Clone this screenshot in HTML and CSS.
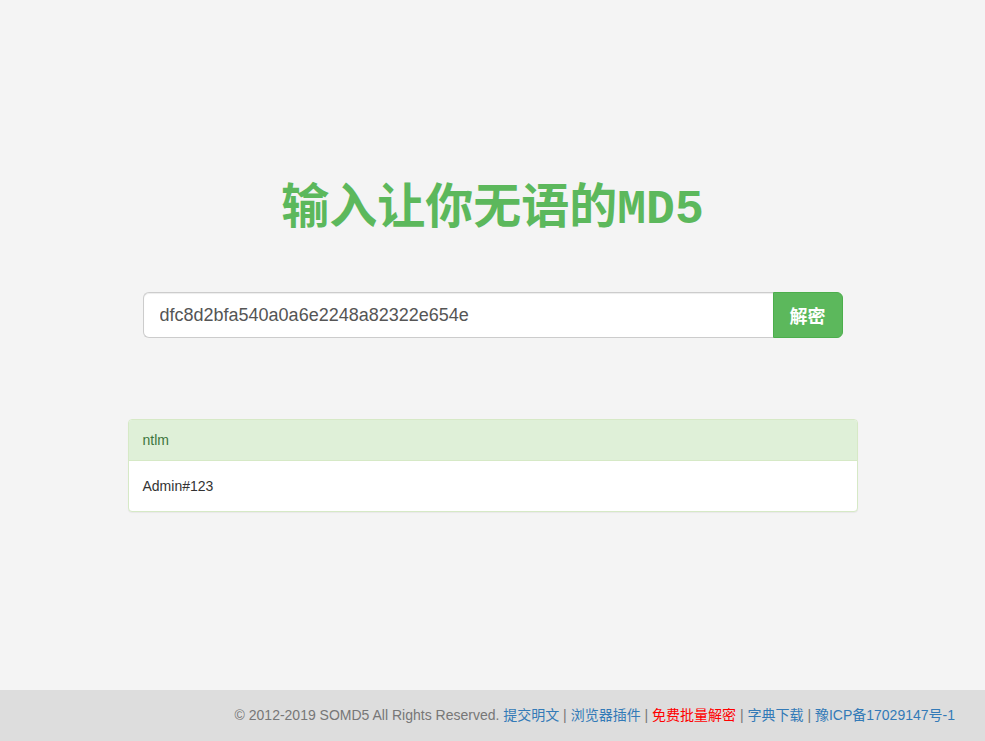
FILE: index.html
```html
<!DOCTYPE html>
<html lang="zh-CN">
<head>
<meta charset="utf-8">
<title>SOMD5 - MD5解密</title>
<link rel="stylesheet" href="styles.css">
</head>
<body>
<div class="page">
  <main class="main">
    <h1 class="title">输入让你无语的MD5</h1>
    <form class="search">
      <input class="search-input" type="text" value="dfc8d2bfa540a0a6e2248a82322e654e">
      <button class="search-btn" type="button">解密</button>
    </form>
    <section class="panel">
      <div class="panel-heading">ntlm</div>
      <div class="panel-body">Admin#123</div>
    </section>
  </main>
  <footer class="footer">
    <p class="footer-line">© 2012-2019 SOMD5 All Rights Reserved. <a href="#">提交明文</a> | <a href="#">浏览器插件</a> | <a href="#" class="hot">免费批量解密</a> | <a href="#">字典下载</a> | <a href="#">豫ICP备17029147号-1</a></p>
  </footer>
</div>
</body>
</html>
```
FILE: styles.css
```css
html, body {
  margin: 0;
  padding: 0;
}

body {
  background: #f4f4f4;
  font-family: "Liberation Sans", Arial, "Noto Sans CJK SC", sans-serif;
  font-size: 14px;
  color: #333;
}

.page {
  min-height: 100vh;
  display: flex;
  flex-direction: column;
}

.main {
  flex: 1;
  display: flex;
  flex-direction: column;
  align-items: center;
  padding-top: 182px;
}

.title {
  margin: 0;
  font-family: "Liberation Mono", "Noto Sans CJK SC", monospace;
  font-size: 48px;
  line-height: 56px;
  font-weight: 700;
  color: #5cb85c;
}

.search {
  margin-top: 54px;
  width: 700px;
  display: flex;
}

.search-input {
  flex: 1;
  height: 46px;
  box-sizing: border-box;
  padding: 10px 16px;
  font-family: "Liberation Sans", Arial, sans-serif;
  font-size: 18px;
  color: #555;
  background: #fff;
  border: 1px solid #ccc;
  border-right: 0;
  border-radius: 6px 0 0 6px;
  box-shadow: inset 0 1px 1px rgba(0, 0, 0, .075);
  outline: none;
}

.search-btn {
  width: 70px;
  height: 46px;
  padding: 0;
  font-family: "Noto Sans CJK SC", sans-serif;
  font-size: 18px;
  font-weight: 700;
  color: #fff;
  background: #5cb85c;
  border: 1px solid #4cae4c;
  border-radius: 0 6px 6px 0;
}

.panel {
  margin-top: 81px;
  width: 730px;
  box-sizing: border-box;
  background: #fff;
  border: 1px solid #d6e9c6;
  border-radius: 4px;
  box-shadow: 0 1px 1px rgba(0, 0, 0, .05);
  overflow: hidden;
}

.panel-heading {
  padding: 10px 14px;
  line-height: 20px;
  color: #3c763d;
  background: #dff0d8;
  border-bottom: 1px solid #d6e9c6;
}

.panel-body {
  padding: 15px 14px;
  line-height: 20px;
  color: #333;
}

.footer {
  height: 51px;
  box-sizing: border-box;
  padding: 0 30px;
  background: #ddd;
  color: #777;
}

.footer-line {
  margin: 0;
  line-height: 51px;
  text-align: right;
}

.footer a {
  color: #337ab7;
  text-decoration: none;
}

.footer a.hot {
  color: #f00;
}
```
